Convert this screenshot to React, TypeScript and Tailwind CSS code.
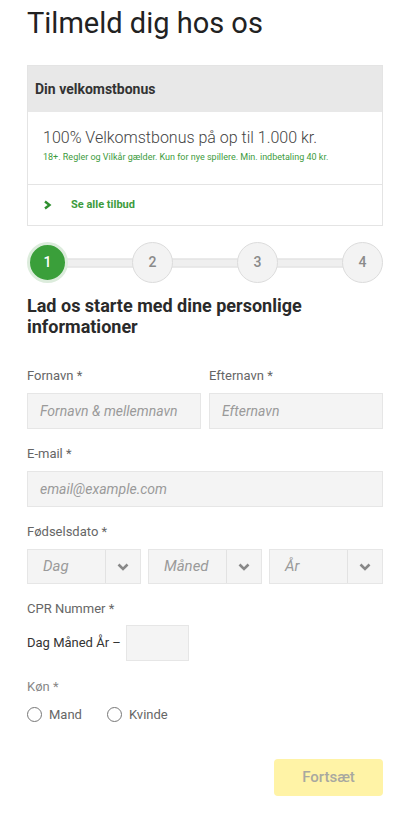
import React from "react";

function Chevron({ className = "" }: { className?: string }) {
  return (
    <svg viewBox="0 0 10 10" className={className} fill="none">
      <path d="M2 1.5 L6.5 5 L2 8.5" stroke="currentColor" strokeWidth="2.4" strokeLinejoin="miter" />
    </svg>
  );
}

function ChevronDown() {
  return (
    <svg viewBox="0 0 12 8" className="w-[12px] h-[8px] text-[#888]" fill="none">
      <path d="M1.5 1.5 L6 6 L10.5 1.5" stroke="currentColor" strokeWidth="2.6" />
    </svg>
  );
}

function Select({ label }: { label: string }) {
  return (
    <div className="flex-1 h-[35px] bg-[#f4f4f4] border border-[#e6e6e6] flex items-center">
      <div className="flex-1 pl-[15px] text-[15px] italic text-[#9a9a9a]">{label}</div>
      <div className="w-[35px] h-full border-l border-[#e2e2e2] flex items-center justify-center">
        <ChevronDown />
      </div>
    </div>
  );
}

function Step({ n, active }: { n: number; active?: boolean }) {
  return (
    <div
      className={
        "w-[41px] h-[41px] rounded-full flex items-center justify-center text-[14px] font-medium shrink-0 z-10 " +
        (active
          ? "bg-[#3a9f3a] text-white border-[3px] border-[#dcecdc]"
          : "bg-[#f3f3f3] text-[#8a8a8a] border-[1.5px] border-[#dcdcdc]")
      }
    >
      {n}
    </div>
  );
}

export default function App() {
  return (
    <div className="min-h-[813px] bg-white font-['Roboto',sans-serif] px-[27px] pr-[28px] text-[#333]">
      <h1 className="text-[29px] leading-[36px] font-normal text-[#222] pt-[5px]">Tilmeld dig hos os</h1>

      <div className="mt-[24px] border border-[#e4e4e4]">
        <div className="h-[46px] bg-[#e8e8e8] flex items-center pl-[7px] text-[14px] font-bold text-[#333]">
          Din velkomstbonus
        </div>
        <div className="h-[73px] border-b border-[#e4e4e4] pl-[15px] pt-[16px]">
          <div className="text-[16px] font-light text-[#444] leading-[20px]">100% Velkomstbonus på op til 1.000 kr.</div>
          <div className="text-[9px] text-[#3d9b3d] mt-[3px] leading-[12px]">
            18+. Regler og Vilkår gælder. Kun for nye spillere. Min. indbetaling 40 kr.
          </div>
        </div>
        <div className="h-[40px] flex items-center pl-[15px]">
          <Chevron className="w-[10px] h-[10px] text-[#2f8f2f]" />
          <span className="ml-[18px] text-[11px] font-bold text-[#3d9b3d]">Se alle tilbud</span>
        </div>
      </div>

      <div className="mt-[16px] relative flex items-center justify-between">
        <div className="absolute left-[20px] right-[20px] top-1/2 -translate-y-1/2 h-[9px] bg-[#efefef] border border-[#dedede]"></div>
        <Step n={1} active />
        <Step n={2} />
        <Step n={3} />
        <Step n={4} />
      </div>

      <h2 className="mt-[12px] text-[18px] font-bold leading-[21px] text-[#2a2a2a]">
        Lad os starte med dine personlige informationer
      </h2>

      <div className="mt-[31px] flex gap-[8px]">
        <div className="flex-1">
          <div className="text-[13px] text-[#666] leading-[16px]">Fornavn *</div>
          <div className="mt-[9px] h-[36px] bg-[#f4f4f4] border border-[#e6e6e6] flex items-center pl-[12px] text-[14px] italic text-[#9a9a9a]">
            Fornavn &amp; mellemnavn
          </div>
        </div>
        <div className="flex-1">
          <div className="text-[13px] text-[#666] leading-[16px]">Efternavn *</div>
          <div className="mt-[9px] h-[36px] bg-[#f4f4f4] border border-[#e6e6e6] flex items-center pl-[12px] text-[14px] italic text-[#9a9a9a]">
            Efternavn
          </div>
        </div>
      </div>

      <div className="mt-[17px] text-[13px] text-[#666] leading-[16px]">E-mail *</div>
      <div className="mt-[9px] h-[36px] bg-[#f4f4f4] border border-[#e6e6e6] flex items-center pl-[12px] text-[14px] italic text-[#9a9a9a]">
        email@example.com
      </div>

      <div className="mt-[17px] text-[13px] text-[#666] leading-[16px]">Fødselsdato *</div>
      <div className="mt-[9px] flex gap-[7px]">
        <Select label="Dag" />
        <Select label="Måned" />
        <Select label="År" />
      </div>

      <div className="mt-[17px] text-[13px] text-[#666] leading-[16px]">CPR Nummer *</div>
      <div className="mt-[8px] flex items-center">
        <span className="text-[13px] text-[#333]">Dag Måned År –</span>
        <div className="ml-[5px] w-[63px] h-[36px] bg-[#f4f4f4] border border-[#e6e6e6]"></div>
      </div>

      <div className="mt-[18px] text-[13px] text-[#888] leading-[16px]">Køn *</div>
      <div className="mt-[10px] flex items-center text-[13px] text-[#666]">
        <span className="w-[15px] h-[15px] rounded-full border border-[#777]"></span>
        <span className="ml-[7px]">Mand</span>
        <span className="ml-[25px] w-[15px] h-[15px] rounded-full border border-[#777]"></span>
        <span className="ml-[7px]">Kvinde</span>
      </div>

      <div className="mt-[34px] flex justify-end">
        <div className="w-[109px] h-[37px] rounded-[4px] bg-[#fff3a6] flex items-center justify-center text-[15px] font-medium text-[#a8a8a0]">
          Fortsæt
        </div>
      </div>
    </div>
  );
}
